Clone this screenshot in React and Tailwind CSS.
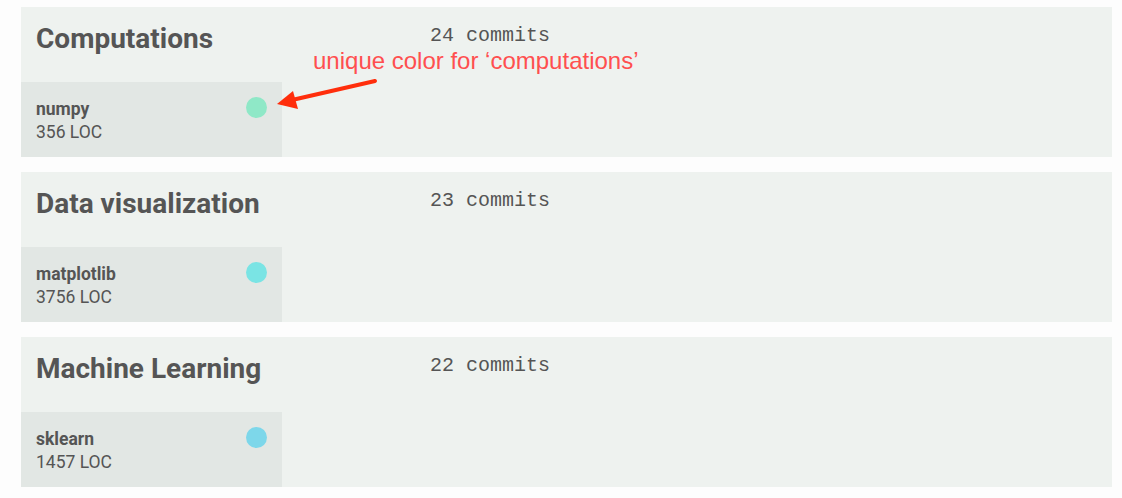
import React from "react";

const groups = [
  { title: "Computations", commits: "24 commits", lib: "numpy", loc: "356 LOC", color: "bg-[#8fe8c7]" },
  { title: "Data visualization", commits: "23 commits", lib: "matplotlib", loc: "3756 LOC", color: "bg-[#7ae4e4]" },
  { title: "Machine Learning", commits: "22 commits", lib: "sklearn", loc: "1457 LOC", color: "bg-[#7dd7ea]" },
];

function Card({ g }) {
  return (
    <div className="flex h-[150px] w-[1091px] flex-col bg-[#eef2ef]">
      <div className="flex h-[75px] items-start pl-[15px]">
        <div className="w-[394px] pt-[16px] text-[28px] font-bold leading-[32px] text-[#555555] [font-family:Roboto,sans-serif]">
          {g.title}
        </div>
        <div className="pt-[17px] text-[20px] leading-[24px] text-[#555555] [font-family:'Liberation_Mono',monospace]">
          {g.commits}
        </div>
      </div>
      <div className="flex h-[75px] w-[261px] items-start justify-between bg-[#e2e7e4] pl-[15px] pr-[15px] pt-[14px]">
        <div className="mt-[2px] flex flex-col text-[17.5px] leading-[23px] text-[#555555] [font-family:Roboto,sans-serif]">
          <span className="font-bold">{g.lib}</span>
          <span>{g.loc}</span>
        </div>
        <div className={`mt-[1px] h-[21px] w-[21px] rounded-full ${g.color}`} />
      </div>
    </div>
  );
}

export default function App() {
  return (
    <div className="relative h-[498px] w-[1122px] bg-[#fdfdfd]">
      <div className="flex flex-col gap-[15px] pl-[21px] pt-[7px]">
        {groups.map((g) => (
          <Card key={g.title} g={g} />
        ))}
      </div>
      <div className="absolute left-[313px] top-[47px] whitespace-nowrap text-[24px] leading-[28px] text-[#ff4f4f] [font-family:'Liberation_Sans',Arial,sans-serif]">
        unique color for ‘computations’
      </div>
      <svg className="absolute left-0 top-0" width="1122" height="498" viewBox="0 0 1122 498">
        <line x1="375" y1="81" x2="292" y2="100" stroke="#ff2e0c" strokeWidth="4" strokeLinecap="round" />
        <polygon points="277,104 293,91 298,109" fill="#ff2e0c" />
      </svg>
    </div>
  );
}
